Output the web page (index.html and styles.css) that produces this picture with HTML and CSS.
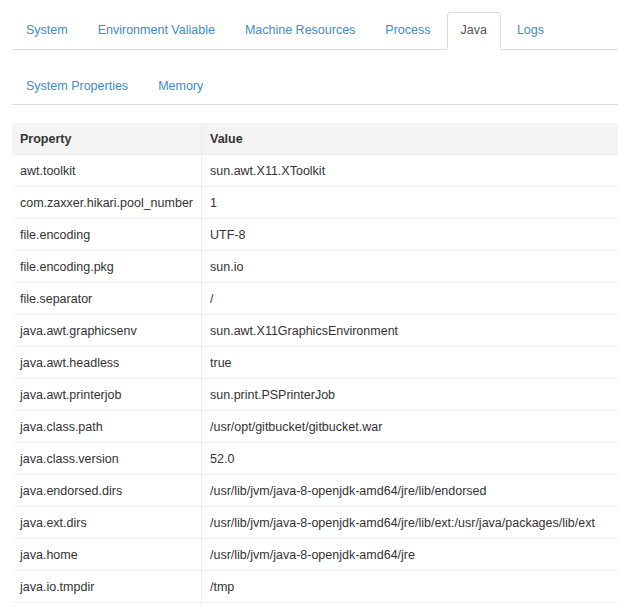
FILE: index.html
```html
<!DOCTYPE html>
<html>
<head>
<meta charset="utf-8">
<link rel="stylesheet" href="styles.css">
</head>
<body>
<div class="page">
  <ul class="tabs main">
    <li><a href="#">System</a></li>
    <li><a href="#">Environment Valiable</a></li>
    <li><a href="#">Machine Resources</a></li>
    <li><a href="#">Process</a></li>
    <li class="active"><a href="#">Java</a></li>
    <li><a href="#">Logs</a></li>
  </ul>
  <ul class="tabs sub">
    <li><a href="#">System Properties</a></li>
    <li><a href="#">Memory</a></li>
  </ul>
  <table class="props">
    <thead>
      <tr><th>Property</th><th>Value</th></tr>
    </thead>
    <tbody>
      <tr><td>awt.toolkit</td><td>sun.awt.X11.XToolkit</td></tr>
      <tr><td>com.zaxxer.hikari.pool_number</td><td>1</td></tr>
      <tr><td>file.encoding</td><td>UTF-8</td></tr>
      <tr><td>file.encoding.pkg</td><td>sun.io</td></tr>
      <tr><td>file.separator</td><td>/</td></tr>
      <tr><td>java.awt.graphicsenv</td><td>sun.awt.X11GraphicsEnvironment</td></tr>
      <tr><td>java.awt.headless</td><td>true</td></tr>
      <tr><td>java.awt.printerjob</td><td>sun.print.PSPrinterJob</td></tr>
      <tr><td>java.class.path</td><td>/usr/opt/gitbucket/gitbucket.war</td></tr>
      <tr><td>java.class.version</td><td>52.0</td></tr>
      <tr><td>java.endorsed.dirs</td><td>/usr/lib/jvm/java-8-openjdk-amd64/jre/lib/endorsed</td></tr>
      <tr><td>java.ext.dirs</td><td>/usr/lib/jvm/java-8-openjdk-amd64/jre/lib/ext:/usr/java/packages/lib/ext</td></tr>
      <tr><td>java.home</td><td>/usr/lib/jvm/java-8-openjdk-amd64/jre</td></tr>
      <tr><td>java.io.tmpdir</td><td>/tmp</td></tr>
      <tr class="partial"><td></td><td></td></tr>
    </tbody>
  </table>
</div>
</body>
</html>
```
FILE: styles.css
```css
html, body {
  margin: 0;
  padding: 0;
  background: #fff;
}
body {
  font-family: "Liberation Sans", Arial, sans-serif;
  font-size: 12.5px;
  color: #333;
  overflow: hidden;
}
.page {
  padding: 12px 0 0 12px;
}
.tabs {
  list-style: none;
  margin: 0;
  padding: 0;
  display: flex;
  border-bottom: 1px solid #ddd;
}
.tabs li {
  margin-right: 2px;
  margin-bottom: -1px;
}
.tabs a {
  display: block;
  padding: 9px 13px;
  line-height: 18px;
  color: #428bca;
  text-decoration: none;
  border: 1px solid transparent;
  border-radius: 4px 4px 0 0;
}
.tabs.main a {
  padding-top: 8px;
  padding-bottom: 10px;
}
.tabs .active a {
  color: #555;
  background: #fff;
  border-color: #ddd #ddd transparent #ddd;
}
.tabs.sub {
  margin-top: 17px;
}
.props {
  margin-top: 18px;
  width: 100%;
  border-collapse: collapse;
  border-spacing: 0;
}
.props th, .props td {
  padding: 8px 8px 6px;
  line-height: 17px;
  text-align: left;
  white-space: nowrap;
  vertical-align: top;
}
.props th {
  background: #f4f4f4;
  font-weight: bold;
}
.props th:first-child, .props td:first-child {
  width: 1%;
}
.props td {
  border-top: 1px solid #eee;
}
.props th + th, .props td + td {
  border-left: 1px solid #eee;
}
.props .partial td {
  height: 17px;
}
```
